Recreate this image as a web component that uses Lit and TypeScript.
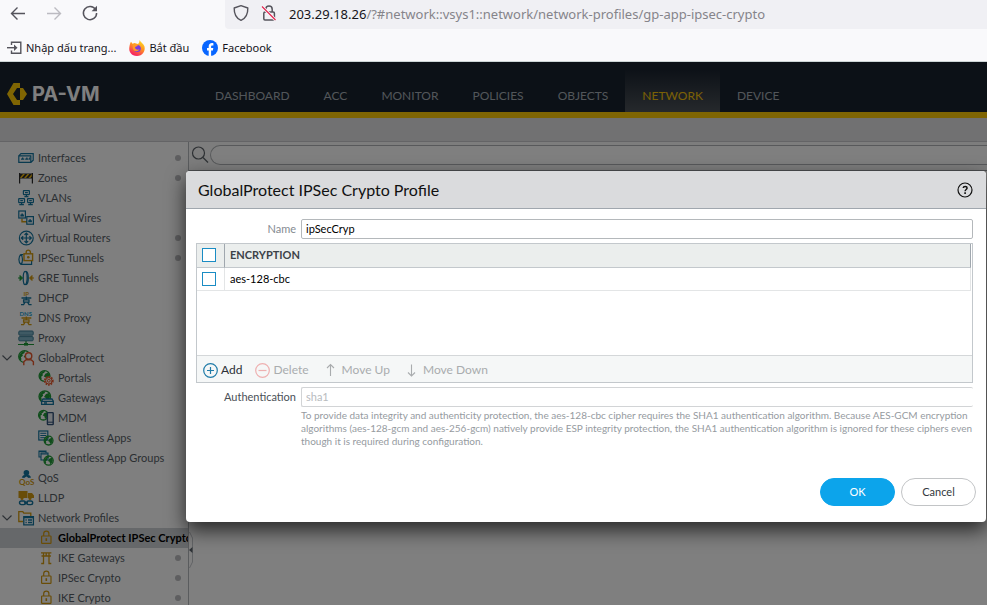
import { LitElement, html, css, svg, nothing, SVGTemplateResult } from "lit";
import { customElement, property } from "lit/decorators.js";
import { classMap } from "lit/directives/class-map.js";

const B = "#12749f";
const Y = "#d39a10";
const G = "#1f9a36";
const O = "#e8592c";

const lock = (c: string) => svg`
  <g fill="none" stroke=${c} stroke-width="1.2">
    <rect x="3.6" y="6" width="9.4" height="7.4" rx=".6"/>
    <path d="M5.7 6V3.8a2.6 2.6 0 0 1 5.2 0V6"/>
  </g><path d="M8.3 8.2v2.8" stroke=${c} stroke-width="1.6"/>`;

const globe = (x: number, y: number, r: number) => svg`
  <circle cx=${x} cy=${y} r=${r} fill="none" stroke=${G} stroke-width="1.3"/>
  <path transform="translate(${x} ${y}) scale(${r / 5})" fill=${G}
    d="M-4.4-1.6-2-4.3l2.6-.4-.8 1.8-1.7.9.5 1.3-1.7 1.4.5 1.6-.9 1.4-1.3-2.6zM1-2.2l2.6-.9 1 2.4-.6 2.8L1.7 4 1 1.2-.7.4z"/>`;

const person = svg`<path d="M3.500 8h9.800M8.300 6.500v3M5.600 9.800h5.400v2.400H5.600zM3 14.600h2.600l1.400-2.400M13.600 14.600H11l-1.400-2.400"/>`;

const icons: Record<string, SVGTemplateResult> = {
  interfaces: svg`<g fill="none" stroke=${B} stroke-width="1.2"><path d="M.8 5.8h12v6.6H.8zM1 5.600l2-2h12.200v6.600l-2.200 2"/></g>
    <path d="M3 9.800V8.400h1V7.400h1.300v1h1v1.400zM7.200 9.800V8.400h1V7.400h1.300v1h.6v1.400zM10.500 9.800V8.400h.5V7.400h.9v2.400z" fill=${B}/>`,
  zones: svg`<rect x="1" y="3.500" width="14" height="5" fill="#2a2a2a"/><path d="M1.600 8 5 4h2L3.600 8zM6 8l3.400-4h2L8 8zM10.400 8l3.400-4h1v1.500L12.400 8z" fill="#f0b90f"/>
    <path d="M1.600 3v10.500M14.400 3v10.500" stroke="#2a2a2a" stroke-width="1.200"/>`,
  vlans: svg`<g fill="none" stroke=${B} stroke-width="1.200"><rect x="5.400" y=".6" width="6" height="4" rx=".5"/><path d="M8.400 4.600v2M6.400 6.600h4M7 2.600h2.800"/>
    <rect x=".7" y="8.600" width="5.800" height="4" rx=".5"/><path d="M3.600 12.600v2M1.300 14.700h4.600M2.300 10.600h2.600"/><rect x="9.600" y="8.600" width="5.800" height="4" rx=".5"/><path d="M12.500 12.600v2M10.200 14.700h4.600M11.200 10.600h2.600"/></g>`,
  vwires: svg`<path d="M4 8.500v3.200h5" fill="none" stroke=${Y} stroke-width="1.400"/><g fill="none" stroke=${B} stroke-width="1.200"><rect x=".8" y="1" width="6.600" height="7"/><rect x="8.800" y="6.600" width="6.600" height="7.600"/></g>
    <path d="M2.400 6.400v-2h1v-1h1.500v1h1v2zM10.300 12.300v-2h1v-1h1.600v1h1v2z" fill=${B}/>`,
  vrouters: svg`<g fill="none" stroke=${B} stroke-width="1.200"><circle cx="8.300" cy="8" r="6.900"/><path d="M8.300 3v10M3.300 8h10M6.500 4.900l1.800-1.900 1.800 1.900M6.500 11.100l1.800 1.900 1.800-1.900M5.200 6.200 3.300 8l1.900 1.800M11.400 6.200 13.300 8l-1.900 1.800"/></g>`,
  ipsec: svg`<g fill="none" stroke=${B} stroke-width="1.200"><path d="M5.500 4.600H3C.2 6.500.2 12.500 3 14.400h10.600V11M3 4.600c2 2 2 7.500 0 9.800"/></g>
    <g fill="none" stroke=${Y} stroke-width="1.400"><rect x="6" y="3.800" width="8.600" height="6.800"/><path d="M8.200 3.800V2.200a2.100 2.100 0 0 1 4.200 0v1.600"/></g><circle cx="10.300" cy="7.200" r="1.300" fill=${Y}/>`,
  gre: svg`<g fill="none" stroke=${B} stroke-width="1.300"><ellipse cx="7.200" cy="8" rx="2" ry="6.700"/><path d="M8 1.300c3 1 3 12.400 0 13.400"/></g>
    <path d="M0 8h3M2 5.500 4.500 8 2 10.500z" fill=${G} stroke=${G}/><path d="M16 8h-3M14 5.500 11.500 8l2.500 2.500z" fill=${Y} stroke=${Y}/>`,
  dhcp: svg`<text x="5.500" y="5.600" font-size="6" font-weight="700" fill=${Y}>IP</text><g fill="none" stroke=${B} stroke-width="1.300">${person}</g>`,
  dns: svg`<text x="1.500" y="5.600" font-size="6" font-weight="700" fill="#2a9fd0">DNS</text><g fill="none" stroke=${Y} stroke-width="1.300">${person}</g>`,
  proxy: svg`<g fill="#7fb4c8" stroke="#3f7f98" stroke-width="1"><rect x=".8" y="1" width="14.400" height="4.200" rx="1"/><rect x=".8" y="6.600" width="14.400" height="4.200" rx="1"/></g>
    <path d="M8 11v3M0 14.500h16" stroke=${G} stroke-width="1.200"/><rect x="6" y="13" width="4" height="2.600" fill=${G}/>`,
  gp: svg`${globe(6.5, 6.5, 5.8)}<g fill="#fff" stroke=${O} stroke-width="1.400"><circle cx="10.600" cy="6" r="3.200"/><path d="M5.800 15.200v-3.500l2-1.800h5.600l2 1.800v3.500"/></g>`,
  portals: svg`${globe(6.5, 6, 5.4)}<circle cx="10.800" cy="10.800" r="4" fill="#fff" stroke=${O} stroke-width="1.800" stroke-dasharray="1.600 1"/><circle cx="10.800" cy="10.800" r="3.200" fill="none" stroke=${O}/><circle cx="10.800" cy="10.800" r="1.400" fill="none" stroke=${O}/>`,
  gateways: svg`${globe(6.8, 6.6, 5.800)}<g fill="#fff" stroke=${B} stroke-width="1.300"><path d="M5 9h9l1.300 2.200v3.200H3.600v-3.200z"/><path d="M3.600 11.300h11.700M6 13h3"/></g>`,
  mdm: svg`${globe(5.400, 5.200, 4.800)}<rect x="9.400" y="2.600" width="5.800" height="12" rx=".6" fill="#e8ecf2" stroke="#33527a" stroke-width="1.400"/><path d="M9.400 12.200h5.800" stroke="#33527a"/>`,
  capps: svg`<rect x=".800" y="1" width="9" height="9" fill="#fff" stroke=${B} stroke-width="1.200"/><path d="M2.300 3.300h6M2.300 5.500h6M2.300 7.700h6" stroke=${B}/>${globe(10.600, 10.600, 4.400)}`,
  cgroups: svg`<g fill="#fff" stroke=${B} stroke-width="1.100"><path d="M1 1h7v6H1z"/><path d="M3 3h7v7H3z"/></g><path d="M1 1.500h7M3 4h7" stroke=${B}/>${globe(10.600, 10.600, 4.600)}`,
  qos: svg`<circle cx="8.400" cy="2.800" r="2.800" fill=${B}/><path d="M3.800 7.600C4.500 5.400 6 4.800 8.400 4.800s4 .6 4.700 2.800l-2.500.4-2.200-1.400L6.200 8z" fill=${B}/><text x="1" y="15" font-size="8" font-weight="700" fill=${Y}>QoS</text>`,
  lldp: svg`<path d="M.5 1h9v7h-9zM10 3h4l2 2.500V8h-6z" fill=${Y}/><circle cx="4" cy="8.500" r="1.500" fill=${Y}/><circle cx="12" cy="8.500" r="1.500" fill=${Y}/>
    <g fill="none" stroke=${B} stroke-width="1.400"><rect x="1.500" y="11" width="6" height="3.600" rx="1.800"/><rect x="8.700" y="11" width="6" height="3.600" rx="1.800"/><path d="M6 12.800h4"/></g>`,
  profiles: svg`<path d="M5 11.500H.8V1.600h4l1 1.600h7V6" fill="none" stroke=${Y} stroke-width="1.300"/><g fill="#fff" stroke=${B} stroke-width="1.300"><path d="M5.800 6.600h9.600v8.200H5.800z"/><path d="M5.800 7.500h9.600M7.500 10h1.200M10 10h4M7.500 12.500h1.200M10 12.500h4"/></g>`,
  lock: lock(Y),
  ike: svg`<path d="M3 2.800h10.400M3.500 6h9.400M5.500 3v10.500H3.200M11 3v10.500h2.300M8.200 3v3" fill="none" stroke=${Y} stroke-width="1.300"/>`,
};

interface Node { label: string; icon: string; level?: number; open?: boolean; dot?: boolean; selected?: boolean }

const tree: Node[] = [
  { label: "Interfaces", icon: "interfaces", dot: true },
  { label: "Zones", icon: "zones", dot: true },
  { label: "VLANs", icon: "vlans" },
  { label: "Virtual Wires", icon: "vwires" },
  { label: "Virtual Routers", icon: "vrouters", dot: true },
  { label: "IPSec Tunnels", icon: "ipsec", dot: true },
  { label: "GRE Tunnels", icon: "gre" },
  { label: "DHCP", icon: "dhcp" },
  { label: "DNS Proxy", icon: "dns" },
  { label: "Proxy", icon: "proxy" },
  { label: "GlobalProtect", icon: "gp", open: true },
  { label: "Portals", icon: "portals", level: 1 },
  { label: "Gateways", icon: "gateways", level: 1 },
  { label: "MDM", icon: "mdm", level: 1 },
  { label: "Clientless Apps", icon: "capps", level: 1 },
  { label: "Clientless App Groups", icon: "cgroups", level: 1 },
  { label: "QoS", icon: "qos" },
  { label: "LLDP", icon: "lldp" },
  { label: "Network Profiles", icon: "profiles", open: true },
  { label: "GlobalProtect IPSec Crypto", icon: "lock", level: 1, dot: true, selected: true },
  { label: "IKE Gateways", icon: "ike", level: 1, dot: true },
  { label: "IPSec Crypto", icon: "lock", level: 1, dot: true },
  { label: "IKE Crypto", icon: "lock", level: 1, dot: true },
];

const reset = css`
  * { box-sizing: border-box; }
  button { border: 0; background: none; padding: 0; margin: 0; font: inherit; color: inherit; }
  a { color: inherit; text-decoration: none; }
  svg { display: block; flex: none; overflow: visible; }
`;

@customElement("browser-bar")
export class BrowserBar extends LitElement {
  static styles = [reset, css`
    :host { display: block; flex: none; background: #f9f9fb; color: #15141a; font-family: "Noto Sans", sans-serif; border-bottom: 1px solid #cdd5d6; }
    .tools { display: flex; height: 29px; }
    .nav { display: flex; gap: 20px; flex: 0 0 225px; padding: 5px 0 0 10px; }
    .nav button { width: 16px; height: 16px; color: #55545c; }
    .nav .off { color: #bcbbc1; }
    .address { display: flex; flex: 1; gap: 12px; padding: 5px 0 0 8px; background: #f0f0f4; border-bottom-left-radius: 4px; min-width: 0; }
    .url { font-size: 13px; line-height: 18px; color: #85848a; white-space: nowrap; }
    .url b { font-weight: 400; color: #15141a; }
    .marks { display: flex; align-items: center; gap: 13px; height: 32px; padding: 5px 7px 0; font-size: 11px; line-height: 16px; }
    .marks a { display: flex; align-items: center; gap: 4px; white-space: nowrap; }
  `];
  render() {
    return html`
      <div class="tools">
        <div class="nav">
          <button aria-label="Back"><svg width="16" height="16" fill="none" stroke="currentColor" stroke-width="1.400"><path d="M1.500 8.500H15M7.500 2.500l-6 6 6 6"/></svg></button>
          <button class="off" aria-label="Forward"><svg width="16" height="16" fill="none" stroke="currentColor" stroke-width="1.400"><path d="M1 8.500h13.500M8.500 2.500l6 6-6 6"/></svg></button>
          <button aria-label="Reload"><svg width="16" height="16" fill="none" stroke="currentColor" stroke-width="1.500"><path d="M13.600 4.600A6.600 6.600 0 1 0 14.600 8"/><path d="M15 .8v5.400H9.600z" fill="currentColor" stroke="none"/></svg></button>
        </div>
        <div class="address">
          <svg width="16" height="16" fill="none" stroke="#55545c" stroke-width="1.400"><path d="M8 .7 14.800 3c.2 6-2 10.300-6.800 12.400C3.200 13.300 1 9 1.200 3z" stroke-linejoin="round"/></svg>
          <svg width="16" height="16" fill="none" stroke="#55545c" stroke-width="1.500"><rect x="2.800" y="7" width="10.600" height="8" rx="1.200"/><path d="M4.800 7V4.200a3.200 3.200 0 0 1 6.400 0V7"/><path d="M1 1.500 14.500 15" stroke="#f9f9fb" stroke-width="3"/><path d="M1 1.500 14.500 15" stroke="#e22850" stroke-width="1.300"/></svg>
          <div class="url"><b>203.29.18.26</b>/?#network::vsys1::network/network-profiles/gp-app-ipsec-crypto</div>
        </div>
      </div>
      <nav class="marks">
        <a href="#import"><svg width="15" height="14" fill="none" stroke="#55545c" stroke-width="1.400"><path d="M4.500 4V1.200h9.300v11H4.500V9.500"/><path d="M0 6.700h8"/><path d="M7 3.500 10.500 6.700 7 10z" fill="#55545c" stroke="none"/></svg>Nhập dấu trang...</a>
        <a href="#start"><svg width="16" height="16" viewBox="0 0 16 16"><defs><linearGradient id="fx" x1=".8" y1="0" x2=".3" y2="1"><stop offset="0" stop-color="#ffe226"/><stop offset=".45" stop-color="#ff9320"/><stop offset="1" stop-color="#f5156c"/></linearGradient></defs><path d="M10.500 0c1 2 4 3.500 5 6.500C16.600 11 13.500 16 8 16S-.3 11.800.3 7.500C.6 5 1.300 3 2 1.800l1.500 2 2-.9L9 4c1-1 1.500-2.400 1.500-4z" fill="url(#fx)"/><circle cx="8.300" cy="8.600" r="3.500" fill="#7a3be0"/><path d="M3.500 4.500c2.500-.8 4.500 0 5.500 1.500-2 0-2.200 1-3 1.600.5 2 2.500 2.600 4.500 1.700-1.500 2.700-5.500 2.600-6.600-.6z" fill="#ff9a2a"/></svg>Bắt đầu</a>
        <a href="#facebook"><svg width="16" height="16" viewBox="0 0 16 16"><circle cx="8" cy="8" r="8" fill="#0866ff"/><path d="M6.700 15.900V10.500H5V8h1.700V6.800c0-2.600 1.300-3.700 3.300-3.700.6 0 1 .05 1.400.15v2.200h-1c-1 0-1.300.5-1.300 1.400V8h2.200l-.4 2.500H9.100v5.400z" fill="#fff"/></svg>Facebook</a>
      </nav>`;
  }
}

@customElement("top-nav")
export class TopNav extends LitElement {
  static styles = [reset, css`
    :host { display: flex; flex: none; height: 56px; background: #18222f; border-bottom: 6px solid #ffcb06; font-family: Lato, sans-serif; }
    .brand { display: flex; align-items: center; gap: 5px; flex: 0 0 198px; padding: 14px 0 0 7px; color: #fff; font: 700 20px/22px Inter, sans-serif; }
    nav { display: flex; padding-top: 8px; }
    a { display: flex; align-items: center; padding: 10px 17px 0; font-size: 12px; line-height: 16px; color: #a5adb4; }
    .on { color: #f5c20a; background: linear-gradient(#1b2430, #4c5258); }
  `];
  render() {
    const tabs = ["DASHBOARD", "ACC", "MONITOR", "POLICIES", "OBJECTS", "NETWORK", "DEVICE"];
    return html`
      <div class="brand"><svg width="20" height="22" fill="#ffcb06"><path d="M6.500 0H13v5H10l-4 6 4 6h3v5H6.500L0 11zM13 5h3l4 6-4 6h-3z"/></svg>PA-VM</div>
      <nav>${tabs.map(t => html`<a href="#${t.toLowerCase()}" class=${classMap({ on: t === "NETWORK" })}>${t}</a>`)}</nav>`;
  }
}

@customElement("side-tree")
export class SideTree extends LitElement {
  @property({ attribute: false }) nodes: Node[] = [];
  static styles = [reset, css`
    :host { display: block; flex: 0 0 189px; overflow: hidden; padding-top: 6px; border-right: 1px solid #b4b8bc; font: 11px/20px Lato, sans-serif; color: #565e66; }
    ul { list-style: none; margin: 0; padding: 0; }
    a { position: relative; display: flex; align-items: center; gap: 4px; height: 20px; padding-left: 18px; white-space: nowrap; }
    .child { padding-left: 38px; }
    .selected { background: #cdd0d4; color: #000; font-weight: 700; }
    .label { position: relative; }
    .twist { position: absolute; left: 2px; top: 7px; }
    .dot { position: absolute; right: 7px; top: 7px; width: 6px; height: 6px; border-radius: 3px; background: #bcbdc0; }
    text { font-family: Lato, sans-serif; line-height: 6px; }
  `];
  render() {
    return html`<ul>${this.nodes.map(n => html`<li>
      <a href="#node" class=${classMap({ child: !!n.level, selected: !!n.selected })}>
        ${n.open ? html`<svg class="twist" width="10" height="6" fill="none" stroke="#5c646c" stroke-width="1.200"><path d="M.5.5 5 5 9.500.5"/></svg>` : nothing}
        ${n.dot ? html`<i class="dot"></i>` : nothing}
        <svg width="16" height="16" viewBox="0 0 16 16">${icons[n.icon]}</svg>
        <span class="label">${n.label}</span>
      </a></li>`)}</ul>`;
  }
}

@customElement("crypto-dialog")
export class CryptoDialog extends LitElement {
  static styles = [reset, css`
    :host { display: block; background: #fff; border-radius: 4px; overflow: hidden; box-shadow: 0 8px 20px rgba(0, 0, 0, .7); font: 11px/16px Lato, sans-serif; color: #000; }
    header { display: flex; align-items: center; justify-content: space-between; height: 38px; padding: 0 13px 0 12px; background: #dadbdd; border-bottom: 1px solid #a0a7ae; }
    h1 { margin: 0; font-size: 16px; line-height: 20px; font-weight: 400; color: #111; }
    .body { padding: 10px 13px 0 10px; }
    .field { display: grid; grid-template-columns: 100px 1fr; column-gap: 5px; align-items: center; }
    label { text-align: right; color: #858b91; }
    label.strong { color: #4a5057; }
    .text { width: 100%; height: 20px; padding: 0 4px 2px; border: 1px solid #b4b8bb; border-radius: 2px; font: inherit; color: #000; background: #fff; }
    .text:disabled { color: #b8bbbe; border-color: #d2d4d6; border-right: 0; }
    .grid { margin: 4px 0; border: 1px solid #c3c8cc; }
    .rows { height: 111px; padding-right: 1px; }
    table { width: 100%; border-collapse: separate; border-spacing: 0; table-layout: fixed; }
    th, td { padding: 0 5px; text-align: left; height: 24px; border-bottom: 1px solid #c3c8cc; border-right: 1px solid #a0a7ae; }
    th { padding-bottom: 2px; background: #ebeeed; color: #3c4248; font-weight: 700; font-size: 11px; }
    td { height: 23px; border-color: #e3e5e6; }
    .pick { width: 28px; }
    .pick input { appearance: none; display: block; width: 14px; height: 14px; margin: 0; border: 1px solid #1a8cc4; background: #fff; }
    .actions { display: flex; align-items: center; height: 27px; padding: 2px 0 0 6px; border-top: 1px solid #d4d7d9; background: #f5f7f7; font-size: 12px; gap: 13px; }
    .actions button { display: flex; align-items: center; gap: 3px; color: #2c3137; }
    .actions button:disabled { color: #a9acae; }
    .actions .move { gap: 6px; }
    .note { margin: 2px 0 0; grid-column: 2; font-size: 10px; line-height: 13px; color: #969b9f; }
    footer { display: flex; justify-content: flex-end; gap: 6px; padding: 30px 10px 16px; }
    footer button { width: 75px; height: 28px; border-radius: 14px; border: 1px solid #c2c4c6; color: #33383d; }
    footer .ok { border-color: #0ca4eb; background: #0ca4eb; color: #fff; }
  `];
  render() {
    const arrow = (d: string) => html`<svg width="14" height="14" fill="none" stroke="#a9acae" stroke-width="1.100"><path d=${d}/></svg>`;
    return html`
      <header><h1 id="t">GlobalProtect IPSec Crypto Profile</h1>
        <button aria-label="Help"><svg width="16" height="16" fill="none" stroke="#111" stroke-width="1.200"><circle cx="8" cy="8" r="7"/><path d="M6.200 6c.2-2 3.900-2 3.900.1 0 1.300-2 1.500-2 3.100" stroke-width="1.500"/><path d="M8.100 10.300v1.600" stroke-width="1.600"/></svg></button>
      </header>
      <div class="body">
        <div class="field"><label for="name">Name</label><input class="text" id="name" value="ipSecCryp"></div>
        <div class="grid">
          <div class="rows"><table>
            <thead><tr><th class="pick"><input type="checkbox" aria-label="Select all"></th><th>ENCRYPTION</th></tr></thead>
            <tbody><tr><td class="pick"><input type="checkbox" aria-label="Select aes-128-cbc"></td><td>aes-128-cbc</td></tr></tbody>
          </table></div>
          <div class="actions">
            <button><svg width="15" height="15" fill="none" stroke="#1f7ba8" stroke-width="1.200"><circle cx="7.500" cy="7.500" r="6.800"/><path d="M7.500 4v7M4 7.500h7"/></svg>Add</button>
            <button disabled><svg width="15" height="15" fill="none" stroke="#eeb0b0" stroke-width="1.200"><circle cx="7.500" cy="7.500" r="6.800"/><path d="M3.500 7.500h8"/></svg>Delete</button>
            <button class="move" disabled>${arrow("M8.500 13V2M5 5l3.500-3.500L12 5")}Move Up</button>
            <button class="move" disabled>${arrow("M8.500 1.500v11M5 9.500 8.500 13 12 9.500")}Move Down</button>
          </div>
        </div>
        <div class="field"><label class="strong" for="auth">Authentication</label><input class="text" id="auth" value="sha1" disabled>
          <p class="note">To provide data integrity and authenticity protection, the aes-128-cbc cipher requires the SHA1 authentication algorithm. Because AES-GCM encryption algorithms (aes-128-gcm and aes-256-gcm) natively provide ESP integrity protection, the SHA1 authentication algorithm is ignored for these ciphers even though it is required during configuration.</p>
        </div>
      </div>
      <footer><button class="ok">OK</button><button>Cancel</button></footer>`;
  }
}

@customElement("app-root")
export class AppRoot extends LitElement {
  static styles = [reset, css`
    :host { display: flex; flex-direction: column; height: 100vh; overflow: hidden; font-family: Lato, sans-serif; }
    .app { position: relative; display: flex; flex-direction: column; flex: 1; min-height: 0; background: #fff; }
    .strip { flex: none; height: 24px; background: #e2e2e5; border-bottom: 1px solid #c8c9cc; }
    .main { display: flex; flex: 1; min-height: 0; }
    .content { position: relative; flex: 1; min-width: 0; }
    .search { display: flex; gap: 2px; height: 29px; padding: 3px 0 0 2px; border-bottom: 1px solid #9a9ea2; background: #fafafa; }
    .search input { flex: 1; min-width: 0; height: 20px; border: 1px solid #b0b3b6; border-right: 0; border-radius: 10px 0 0 10px; background: #fff; }
    .search label { width: 17px; }
    .handle { position: absolute; left: 0; bottom: 37px; width: 4px; height: 36px; }
    .shade { position: absolute; inset: 0; background: rgba(0, 0, 0, .5); }
    crypto-dialog { position: absolute; top: 109px; left: 186px; right: 1px; }
  `];
  render() {
    return html`
      <browser-bar></browser-bar>
      <div class="app">
        <top-nav></top-nav>
        <div class="strip"></div>
        <div class="main">
          <side-tree .nodes=${tree}></side-tree>
          <div class="content">
            <div class="search">
              <label for="q" aria-label="Search"><svg width="18" height="18" fill="none" stroke="#5c6268" stroke-width="1.200"><circle cx="7.500" cy="8" r="6"/><path d="m12 12.500 5 5"/></svg></label>
              <input id="q" type="search">
            </div>
            <svg class="handle"><path d="M.5 0 3.500 6v24L.5 36" fill="none" stroke="#c4c8cc"/><path d="M3.500 15v6L0 18z" fill="#5c646c"/></svg>
          </div>
        </div>
        <div class="shade"></div>
        <crypto-dialog role="dialog" aria-label="GlobalProtect IPSec Crypto Profile"></crypto-dialog>
      </div>`;
  }
}
